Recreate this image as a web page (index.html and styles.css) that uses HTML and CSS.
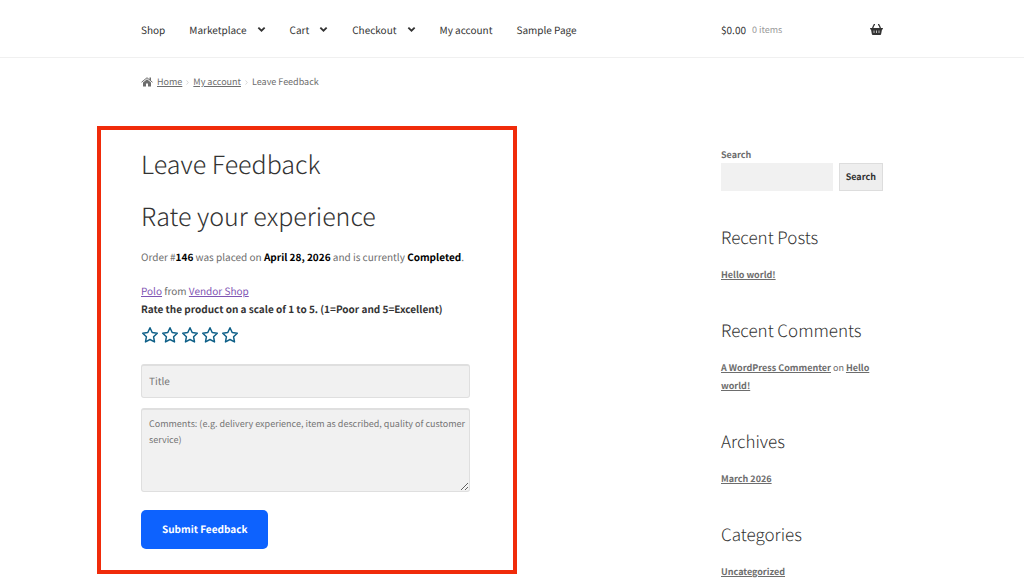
FILE: index.html
```html
<!DOCTYPE html>
<html lang="en">
<head>
    <meta charset="UTF-8">
    <meta name="viewport" content="width=device-width, initial-scale=1.0">
    <title>Leave Feedback</title>
    <link rel="stylesheet" href="styles.css">
</head>
<body>

<!-- shared icon shapes -->
<svg class="icon-defs" aria-hidden="true">
    <symbol id="chevron" viewBox="0 0 10 7">
        <path d="M1.500 1.500 5 4.900 8.500 1.500" fill="none" stroke="currentColor" stroke-width="2"/>
    </symbol>
    <symbol id="star" viewBox="0 0 18 18">
        <path d="M9 1.800l2.200 4.700 5.100.7-3.700 3.600.9 5.100L9 13.500l-4.500 2.400.9-5.100L1.700 7.200l5.100-.7z" fill="none" stroke="currentColor" stroke-width="1.500" stroke-linejoin="round"/>
    </symbol>
</svg>

<header class="site-header">
    <div class="container header-row">
        <nav class="main-nav">
            <a href="#">Shop</a>
            <a href="#">Marketplace <svg class="chevron"><use href="#chevron"/></svg></a>
            <a href="#">Cart <svg class="chevron"><use href="#chevron"/></svg></a>
            <a href="#">Checkout <svg class="chevron"><use href="#chevron"/></svg></a>
            <a href="#">My account</a>
            <a href="#">Sample Page</a>
        </nav>
        <a class="cart-link" href="#">
            <span class="amount">$0.00</span>
            <span class="count">0 items</span>
            <svg class="basket" viewBox="0 0 26 22">
                <path d="M1 8h24q1 0 1 1.500t-1.500 1.500H24l-1.700 9q-.3 2-2 2H5.700q-1.700 0-2-2L2 11h-.5Q0 11 0 9.500T1 8z" fill="currentColor"/>
                <path d="M5 9 7.500 2.500Q8 1 10 1M21 9l-2.500-6.500Q18 1 16 1" fill="none" stroke="currentColor" stroke-width="2.500"/>
                <path d="M8 13v5M13 13v5M18 13v5" stroke="#fff" stroke-width="1.400"/>
            </svg>
        </a>
    </div>
</header>

<div class="container">
    <nav class="breadcrumb">
        <svg class="home" viewBox="0 0 24 20">
            <path d="M12 4.500 20 11v8h-6v-6h-4v6H4v-8z" fill="currentColor"/>
            <path d="M1 10.500 12 1.500l11 9" fill="none" stroke="currentColor" stroke-width="2"/>
            <path d="M17 1h3v7l-3-2.500z" fill="currentColor"/>
        </svg>
        <a href="#">Home</a>
        <svg class="separator" viewBox="0 0 4 7"><path d="M.7.7 3 3.500.7 6.300" fill="none" stroke="currentColor"/></svg>
        <a href="#">My account</a>
        <svg class="separator" viewBox="0 0 4 7"><path d="M.7.7 3 3.500.7 6.300" fill="none" stroke="currentColor"/></svg>
        <span>Leave Feedback</span>
    </nav>

    <div class="columns">
        <main class="feedback">
            <h1>Leave Feedback</h1>
            <h2>Rate your experience</h2>
            <p class="order">Order #<strong>146</strong> was placed on <strong>April 28, 2026</strong> and is currently <strong>Completed</strong>.</p>

            <form>
                <p class="product"><a href="#">Polo</a> from <a href="#">Vendor Shop</a></p>
                <fieldset class="rating">
                    <legend>Rate the product on a scale of 1 to 5. (1=Poor and 5=Excellent)</legend>
                    <div class="stars">
                        <label><input type="radio" name="rating" value="1" aria-label="1 star"><svg><use href="#star"/></svg></label>
                        <label><input type="radio" name="rating" value="2" aria-label="2 stars"><svg><use href="#star"/></svg></label>
                        <label><input type="radio" name="rating" value="3" aria-label="3 stars"><svg><use href="#star"/></svg></label>
                        <label><input type="radio" name="rating" value="4" aria-label="4 stars"><svg><use href="#star"/></svg></label>
                        <label><input type="radio" name="rating" value="5" aria-label="5 stars"><svg><use href="#star"/></svg></label>
                    </div>
                </fieldset>
                <input class="field" type="text" name="title" placeholder="Title" aria-label="Title">
                <textarea class="field comments" name="comments" placeholder="Comments: (e.g. delivery experience, item as described, quality of customer service)" aria-label="Comments"></textarea>
                <button type="submit" class="submit-btn">Submit Feedback</button>
            </form>
        </main>

        <aside class="sidebar">
            <form class="search">
                <label for="search">Search</label>
                <div class="search-row">
                    <input type="search" id="search" name="s">
                    <button type="submit">Search</button>
                </div>
            </form>
            <section>
                <h2>Recent Posts</h2>
                <p><a href="#">Hello world!</a></p>
            </section>
            <section>
                <h2>Recent Comments</h2>
                <p><a href="#">A WordPress Commenter</a> on <a href="#">Hello world!</a></p>
            </section>
            <section>
                <h2>Archives</h2>
                <p><a href="#">March 2026</a></p>
            </section>
            <section>
                <h2>Categories</h2>
                <p><a href="#">Uncategorized</a></p>
            </section>
        </aside>
    </div>
</div>

</body>
</html>
```
FILE: styles.css
```css
* {
    box-sizing: border-box;
}
body {
    margin: 0;
    background: #fff;
    color: #6d6d6d;
    font-family: "Noto Sans CJK SC", "Open Sans", sans-serif;
    font-size: 10px;
    line-height: 18px;
    text-rendering: geometricPrecision;
}
h1, h2, p {
    margin: 0;
}
h1, h2 {
    color: #333;
    font-weight: 300;
}
input, textarea, button {
    text-rendering: inherit;
}
.icon-defs {
    display: none;
}
.container {
    max-width: 742px;
    margin: 0 auto;
}

/* header */
.site-header {
    border-bottom: 1px solid #f0f0f0;
}
.header-row {
    display: grid;
    grid-template-columns: 1fr 162px;
    align-items: center;
    height: 57px;
    padding-top: 2px;
}
.main-nav {
    display: flex;
    gap: 24px;
}
.main-nav a {
    display: flex;
    align-items: center;
    gap: 10px;
    color: #333;
    text-decoration: none;
}
.chevron {
    width: 9px;
    height: 7px;
}
.cart-link {
    display: flex;
    align-items: center;
    gap: 6px;
    color: #333;
    text-decoration: none;
}
.count {
    color: #999;
    font-size: 9px;
}
.basket {
    width: 13px;
    height: 11px;
    margin-left: auto;
}

/* breadcrumb */
.breadcrumb {
    display: flex;
    align-items: center;
    gap: 4px;
    padding: 15px 0 35px;
    font-size: 9px;
}
.breadcrumb a {
    color: #6d6d6d;
}
.home {
    width: 12px;
    height: 10px;
}
.separator {
    width: 3px;
    height: 7px;
    color: #ccc;
}

/* page columns */
.columns {
    display: grid;
    grid-template-columns: 1fr 162px;
    column-gap: 251px;
    align-items: start;
}
.feedback {
    margin: 0 -47px 0 -44px;
    padding: 14px 43px 21px 40px;
    border: 4px solid #f02b0a;
}
.feedback h1,
.feedback h2 {
    font-size: 25px;
    line-height: 40px;
    margin-bottom: 12px;
}
.order strong {
    color: #000;
}
.product {
    margin-top: 16px;
}
.product a {
    color: #7f54b3;
}
.rating {
    margin: 0;
    padding: 0;
    border: 0;
}
.rating legend {
    padding: 0;
    color: #333;
    font-weight: 700;
}
.stars {
    display: flex;
    gap: 2px;
    margin: 8px 0 20px;
}
.stars label {
    position: relative;
    width: 18px;
    height: 18px;
    color: #0f6088;
    cursor: pointer;
}
.stars input {
    position: absolute;
    inset: 0;
    margin: 0;
    opacity: 0;
}
.stars svg {
    display: block;
    width: 18px;
    height: 18px;
}
.field {
    display: block;
    width: 100%;
    height: 34px;
    margin-bottom: 10px;
    padding: 5px 0 7px 7px;
    border: 1px solid #dfdfdf;
    border-top-width: 2px;
    border-radius: 3px;
    background: #f1f1f1;
    color: #43454b;
    font: inherit;
}
.field::placeholder {
    color: #757575;
}
.comments {
    height: 84px;
    margin-bottom: 18px;
    padding-top: 6px;
    font-size: 9px;
    line-height: 16px;
    resize: vertical;
}
.submit-btn {
    display: block;
    height: 39px;
    padding: 0 21px 2px;
    border: 0;
    border-radius: 5px;
    background: #0d62fe;
    color: #fff;
    font: inherit;
    font-weight: 700;
    cursor: pointer;
}

/* sidebar */
.sidebar {
    padding-top: 20px;
    font-size: 9px;
}
.search {
    margin-bottom: 32px;
}
.search label {
    display: block;
    line-height: 17px;
    font-weight: 700;
}
.search-row {
    display: flex;
    gap: 6px;
}
.search-row input {
    flex: 1;
    min-width: 0;
    height: 28px;
    border: 0;
    background: #f1f1f1;
    font: inherit;
}
.search-row button {
    height: 28px;
    padding: 0 6px;
    border: 1px solid #ddd;
    background: #eee;
    color: #333;
    font: inherit;
    font-weight: 700;
}
.sidebar section {
    margin-top: 32px;
}
.sidebar h2 {
    margin-bottom: 15px;
    font-size: 17px;
    line-height: 28px;
}
.sidebar a {
    color: #6d6d6d;
    font-weight: 700;
}
```
